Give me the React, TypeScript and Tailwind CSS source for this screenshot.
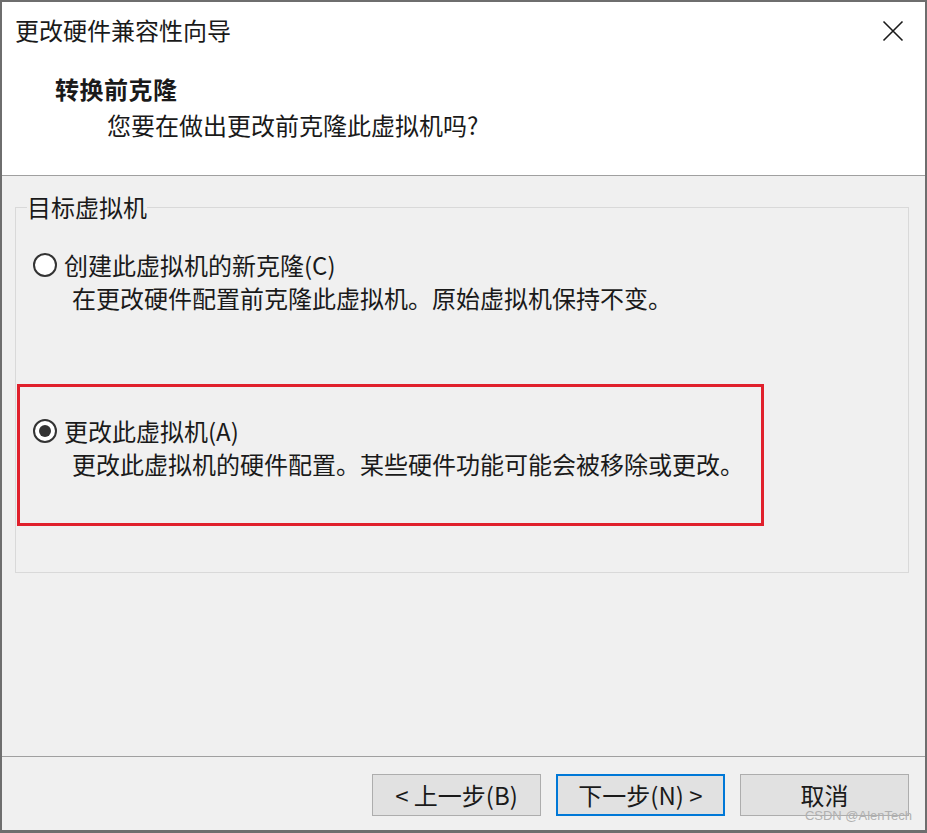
const font = { fontFamily: '"Noto Sans CJK SC", "Noto Sans", sans-serif' }

function Radio({ checked }: { checked?: boolean }) {
  return (
    <span className="flex h-[24px] w-[24px] shrink-0 items-center justify-center rounded-full border-2 border-[#333333] bg-white">
      {checked && <span className="h-[12px] w-[12px] rounded-full bg-[#333333]" />}
    </span>
  )
}

function Option({ label, desc, checked }: { label: string; desc: string; checked?: boolean }) {
  return (
    <div className="text-[24px] text-[#1a1a1a]">
      <div className="flex h-[33px] items-center gap-[7px]">
        <Radio checked={checked} />
        <span className="leading-[33px]">{label}</span>
      </div>
      <div className="pl-[39px] leading-[33px]">{desc}</div>
    </div>
  )
}

function Button({ children, focused }: { children: React.ReactNode; focused?: boolean }) {
  return (
    <button
      className={
        focused
          ? 'flex h-[42px] w-[169px] items-center justify-center border-2 border-[#0078d7] bg-[#e1e1e1] text-[24px] text-[#1a1a1a]'
          : 'flex h-[42px] w-[169px] items-center justify-center border border-[#adadad] bg-[#e1e1e1] text-[24px] text-[#1a1a1a]'
      }
    >
      {children}
    </button>
  )
}

export default function App() {
  return (
    <div
      style={font}
      className="relative flex h-[833px] w-[927px] flex-col border-2 border-b-[3px] border-[#6e6e6e] bg-[#f0f0f0]"
    >
      {/* header */}
      <header className="h-[174px] shrink-0 border-b border-[#a0a0a0] bg-white">
        <div className="flex items-center justify-between pl-[13px] pr-[21px] pt-[12px]">
          <h1 className="text-[24px] leading-[32px] text-[#1a1a1a]">更改硬件兼容性向导</h1>
          <svg width="22" height="22" viewBox="0 0 22 22" className="mt-[2px]">
            <path d="M1.5 1.5 L20.5 20.5 M20.5 1.5 L1.5 20.5" stroke="#1a1a1a" strokeWidth="1.6" />
          </svg>
        </div>
        <div className="pl-[53px] pt-[27px] text-[24px] font-bold leading-[32px] tracking-[0.5px] text-[#1a1a1a]">
          转换前克隆
        </div>
        <div className="pl-[105px] pt-[4px] text-[24px] leading-[32px] text-[#1a1a1a]">您要在做出更改前克隆此虚拟机吗?</div>
      </header>

      {/* body */}
      <main className="flex-1 pl-[13px] pt-[17px]">
        <fieldset className="h-[380px] w-[894px] border border-[#d9d9d9]">
          <legend className="ml-[11px] text-[24px] leading-[28px] text-[#1a1a1a]">目标虚拟机</legend>
          <div className="pl-[17px] pt-[27px]">
            <Option label="创建此虚拟机的新克隆(C)" desc="在更改硬件配置前克隆此虚拟机。原始虚拟机保持不变。" />
          </div>
          <div className="ml-[1px] mt-[70px] w-[747px] border-[3px] border-[#e0202c] pb-[43px] pl-[13px] pt-[27px]">
            <Option checked label="更改此虚拟机(A)" desc="更改此虚拟机的硬件配置。某些硬件功能可能会被移除或更改。" />
          </div>
        </fieldset>
      </main>

      {/* footer */}
      <footer className="h-[74px] shrink-0 border-t border-[#a0a0a0] pt-[17px]">
        <div className="flex justify-end gap-[15px] pr-[16px]">
          <Button>&lt; 上一步(B)</Button>
          <Button focused>下一步(N) &gt;</Button>
          <Button>取消</Button>
        </div>
      </footer>

      <span
        className="absolute bottom-[5px] right-[13px] text-[13px] text-[#b0b0b0]"
        style={{ fontFamily: '"Liberation Sans", Arial, sans-serif' }}
      >
        CSDN @AlenTech
      </span>
    </div>
  )
}
